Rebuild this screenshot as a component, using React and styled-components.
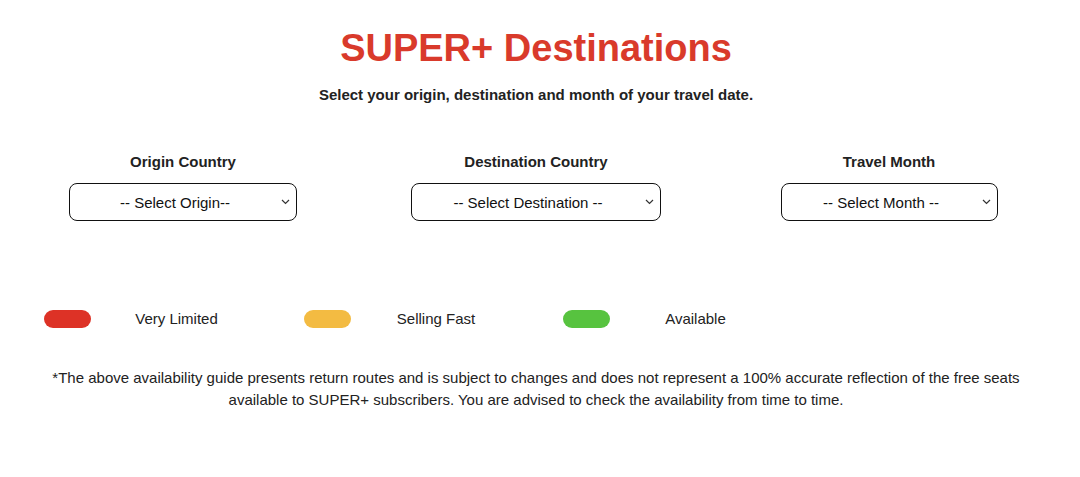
import React from 'react'
import styled, { createGlobalStyle } from 'styled-components'

const GlobalStyle = createGlobalStyle`
  html, body {
    margin: 0;
    padding: 0;
    background: #ffffff;
    font-family: "Liberation Sans", Arial, Helvetica, sans-serif;
    color: #222222;
  }
`

const Page = styled.div`
  width: 1072px;
  padding-top: 26px;
  display: flex;
  flex-direction: column;
  align-items: center;
`

const Title = styled.h1`
  margin: 0;
  font-size: 38px;
  line-height: 44px;
  font-weight: 700;
  color: #d93a2b;
`

const Subtitle = styled.p`
  margin: 16px 0 0;
  font-size: 15px;
  line-height: 18px;
  font-weight: 700;
  color: #222;
`

const Filters = styled.div`
  display: grid;
  grid-template-columns: repeat(3, 353px);
  margin-top: 49px;
`

const Field = styled.div`
  display: flex;
  flex-direction: column;
  align-items: center;
`

const Label = styled.label`
  font-size: 15px;
  line-height: 18px;
  font-weight: 700;
  color: #222;
`

const SelectWrap = styled.div`
  position: relative;
  margin-top: 12px;
  width: ${p => p.$width}px;
`

const Select = styled.select`
  appearance: none;
  -webkit-appearance: none;
  width: 100%;
  height: 38px;
  border: 1.5px solid #111;
  border-radius: 8px;
  background: #fff;
  font-family: "Liberation Sans", Arial, Helvetica, sans-serif;
  font-size: 15px;
  color: #111;
  text-align: center;
  text-align-last: center;
  padding: 0 20px 0 4px;
  outline: none;
`

const Chevron = styled.svg`
  position: absolute;
  right: 7px;
  top: 16px;
  pointer-events: none;
`

const Legend = styled.div`
  align-self: flex-start;
  display: flex;
  margin-top: 89px;
  margin-left: 44px;
`

const LegendItem = styled.div`
  width: 259.5px;
  display: flex;
  align-items: center;
`

const Pill = styled.span`
  width: 47px;
  height: 18px;
  border-radius: 9px;
  background: ${p => p.$color};
  flex-shrink: 0;
`

const LegendText = styled.span`
  width: 171px;
  text-align: center;
  font-size: 15px;
  line-height: 18px;
  color: #222;
`

const Note = styled.p`
  margin: 39px 0 0;
  width: 990px;
  text-align: center;
  font-size: 15px;
  line-height: 22px;
  color: #222;
`

const ChevronIcon = () => (
  <Chevron width="9" height="6" viewBox="0 0 9 6">
    <path d="M1 1l3.5 3.5L8 1" fill="none" stroke="#333" strokeWidth="1.2" />
  </Chevron>
)

const fields = [
  { label: 'Origin Country', placeholder: '-- Select Origin--', width: 228 },
  { label: 'Destination Country', placeholder: '-- Select Destination --', width: 250 },
  { label: 'Travel Month', placeholder: '-- Select Month --', width: 217 },
]

const legend = [
  { color: '#dd3226', text: 'Very Limited' },
  { color: '#f3bb42', text: 'Selling Fast' },
  { color: '#57c33f', text: 'Available' },
]

const App = () => (
  <>
    <GlobalStyle />
    <Page>
      <Title>SUPER+ Destinations</Title>
      <Subtitle>Select your origin, destination and month of your travel date.</Subtitle>
      <Filters>
        {fields.map(f => (
          <Field key={f.label}>
            <Label>{f.label}</Label>
            <SelectWrap $width={f.width}>
              <Select defaultValue="">
                <option value="">{f.placeholder}</option>
              </Select>
              <ChevronIcon />
            </SelectWrap>
          </Field>
        ))}
      </Filters>
      <Legend>
        {legend.map(l => (
          <LegendItem key={l.text}>
            <Pill $color={l.color} />
            <LegendText>{l.text}</LegendText>
          </LegendItem>
        ))}
      </Legend>
      <Note>
        *The above availability guide presents return routes and is subject to changes and does not represent a 100% accurate reflection of the free seats available to SUPER+ subscribers. You are advised to check the availability from time to time.
      </Note>
    </Page>
  </>
)

export default App
